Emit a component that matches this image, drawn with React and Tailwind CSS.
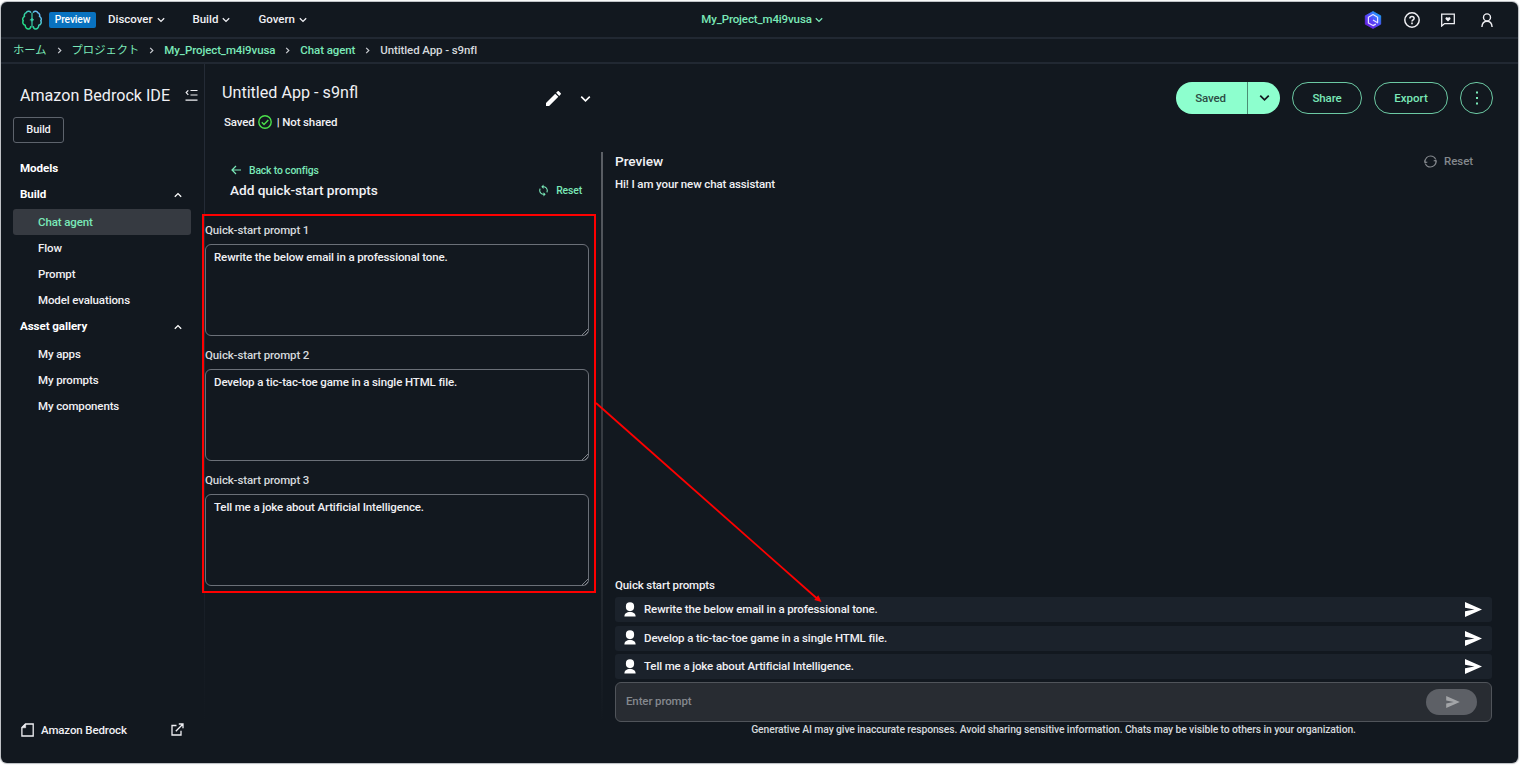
const Chevron = ({ dir = "down", className = "w-[8px] h-[6px]", sw = 1.3 }) => (
  <svg viewBox="0 0 8 6" fill="none" stroke="currentColor" strokeWidth={sw} className={className}>
    {dir === "down" ? <path d="M0.8 1.2 4 4.4 7.2 1.2" /> : <path d="M0.8 4.8 4 1.6 7.2 4.8" />}
  </svg>
);

const ChevronRight = () => (
  <svg viewBox="0 0 5 8" fill="none" stroke="currentColor" strokeWidth="1.4" className="h-[7px] w-[5px] text-[#c6c9ce]">
    <path d="M1 1 4 4 1 7" />
  </svg>
);

const BrainLogo = () => (
  <svg viewBox="0 0 20 20" fill="none" stroke="url(#brain)" strokeWidth="1.5" strokeLinejoin="round" strokeLinecap="round" className="h-5 w-5">
    <defs>
      <linearGradient id="brain" x1="2" y1="18" x2="18" y2="3" gradientUnits="userSpaceOnUse">
        <stop offset="0" stopColor="#1edb7c" />
        <stop offset="0.5" stopColor="#35d3a8" />
        <stop offset="1" stopColor="#6fb6ff" />
      </linearGradient>
    </defs>
    <path d="M8.600 2.200C7.600 0.700 5 0.900 4.200 2.800 2.600 3.200 1.900 4.900 2.500 6.400 0.500 7.600 0.300 9.600 1.200 10.600 0.300 12.600 1 14.600 3.200 15.200 3.200 17.500 4.800 19.200 6.600 19 8 18.900 8.600 18 8.600 16.800" />
    <path d="M11.400 2.200C12.400 0.700 15 0.900 15.800 2.800 17.400 3.200 18.100 4.900 17.500 6.400 19.500 7.600 19.700 9.600 18.800 10.600 19.700 12.600 19 14.600 16.800 15.200 16.800 17.500 15.200 19.200 13.400 19 12 18.900 11.400 18 11.400 16.800" />
    <rect x="9.400" y="2.500" width="1.200" height="15" rx="0.600" fill="#3ad0ae" stroke="none" />
    <path d="M8 9.800 10 8.300 12 9.800 10 11.300Z" fill="url(#brain)" strokeWidth="0.300" />
  </svg>
);

const HexLogo = () => (
  <svg viewBox="0 0 18 18" className="h-[18px] w-[18px]">
    <defs>
      <linearGradient id="hex" x1="3" y1="16" x2="15" y2="2" gradientUnits="userSpaceOnUse">
        <stop offset="0" stopColor="#6a1fe0" />
        <stop offset="0.5" stopColor="#5548fa" />
        <stop offset="1" stopColor="#1ba6ff" />
      </linearGradient>
    </defs>
    <path d="M9 0.500 16.700 4.800V13.200L9 17.500 1.300 13.200V4.800Z" fill="url(#hex)" stroke="url(#hex)" strokeWidth="0.800" strokeLinejoin="round" />
    <path d="M11.800 13.100 9 14.600 4.400 12V6.200L9 3.600 13.600 6.200V11.800L9 9" fill="none" stroke="#e6e2ff" strokeWidth="1.200" strokeLinejoin="round" />
  </svg>
);

const HelpIcon = () => (
  <svg viewBox="0 0 16 16" fill="none" stroke="currentColor" className="h-4 w-4">
    <circle cx="8" cy="8" r="7.200" strokeWidth="1.500" />
    <path d="M5.900 6.500C5.900 3.800 10.100 3.900 10.100 6.400 10.100 7.900 8 7.900 8 9.600" strokeWidth="1.500" />
    <path d="M8 10.600V12.200" strokeWidth="1.600" />
  </svg>
);

const FeedbackIcon = () => (
  <svg viewBox="0 0 14 14" fill="none" stroke="currentColor" className="h-[14px] w-[14px]">
    <path d="M0.700 1.200H13.300V10.600H3.600L0.700 13Z" strokeWidth="1.300" />
    <path d="M7 8.500 4.500 5.900C4.100 4.200 6.200 3.600 7 4.800 7.800 3.600 9.900 4.200 9.500 5.900Z" fill="currentColor" stroke="none" />
  </svg>
);

const UserIcon = () => (
  <svg viewBox="0 0 12 14" fill="none" stroke="currentColor" strokeWidth="1.400" className="h-[14px] w-[12px]">
    <circle cx="6" cy="4.400" r="3.500" />
    <path d="M0.900 14C1.200 10.500 3.200 8.300 6 8.300S10.800 10.500 11.100 14" />
  </svg>
);

const MenuFold = () => (
  <svg viewBox="0 0 13 12" fill="none" stroke="currentColor" strokeWidth="1.200" className="mb-[2px] h-3 w-[13px]">
    <path d="M5.500 1.500H12.500M5.500 6H12.500M0.500 11.200H12.500M3.300 1.300 1.200 3.600 3.300 5.900" />
  </svg>
);

const SyncIcon = ({ className }) => (
  <svg viewBox="2 0 20 24" fill="currentColor" className={className}>
    <path d="M12 4V1L8 5l4 4V6c3.310 0 6 2.690 6 6 0 1.010-.25 1.970-.7 2.800l1.460 1.460C19.540 15.030 20 13.570 20 12c0-4.420-3.580-8-8-8zm0 14c-3.310 0-6-2.690-6-6 0-1.010.25-1.970.7-2.800L5.240 7.740C4.460 8.970 4 10.430 4 12c0 4.420 3.580 8 8 8v3l4-4-4-4v3z" />
  </svg>
);

const RefreshRing = () => (
  <svg viewBox="0 0 13 13" fill="none" stroke="currentColor" strokeWidth="1.100" className="h-[13px] w-[13px]">
    <path d="M1 7.500C0.500 3 4 1 6.500 1 9 1 10.800 2.300 11.600 4.300M12 5.500C12.500 10 9 12 6.500 12 4 12 2.200 10.700 1.400 8.700" />
    <path d="M12.300 7.500 11.900 5.200 9.700 6M0.700 5.500 1.100 7.800 3.300 7" />
  </svg>
);

const Pencil = () => (
  <svg viewBox="3 3 18 18" fill="currentColor" className="h-[15px] w-[15px]">
    <path d="M3 17.250V21h3.750L17.810 9.940l-3.750-3.750L3 17.250zM20.710 7.040c.39-.39.39-1.020 0-1.410l-2.340-2.340a.9959.9959 0 0 0-1.410 0l-1.830 1.830 3.750 3.750 1.830-1.830z" />
  </svg>
);

const SendIcon = ({ className }) => (
  <svg viewBox="0 0 17 15" fill="currentColor" className={className}>
    <path d="M0 0 17 7.500 0 15V9.300L9.500 7.500 0 5.700Z" />
  </svg>
);

const PersonSolid = () => (
  <svg viewBox="0 0 12 15" fill="currentColor" className="mb-px h-[15px] w-[12px] text-white">
    <rect x="1.900" y="0.200" width="8.200" height="9" rx="4.100" />
    <path d="M0.400 14.600C0.400 11.500 2.500 10 6 10S11.600 11.500 11.600 14.600Z" />
  </svg>
);

const NAV = ["Discover", "Build", "Govern"];
const CRUMBS = ["ホーム", "プロジェクト", "My_Project_m4i9vusa", "Chat agent"];
const PROMPTS = [
  "Rewrite the below email in a professional tone.",
  "Develop a tic-tac-toe game in a single HTML file.",
  "Tell me a joke about Artificial Intelligence.",
];

function NavItem({ label, active }) {
  return (
    <a className={active ? "flex h-[26px] items-center rounded-[3px] bg-[#363a41] pt-px pl-[25px] text-[#7ae8b8]" : "flex h-[26px] items-center pt-px pl-[25px]"}>
      {label}
    </a>
  );
}

function NavHeading({ label, open }) {
  return (
    <div className="flex h-[26px] items-center justify-between pt-px pr-[9px] pl-[7px] text-[11.600px] font-bold tracking-[-0.08px] text-white">
      {label}
      {open && <Chevron dir="up" />}
    </div>
  );
}

function TopBar() {
  return (
    <header className="grid h-[37px] shrink-0 grid-cols-[1fr_auto_1fr] items-center border-b-2 border-[#212832] pt-px pr-[25px] pl-[21px]">
      <div className="flex items-center">
        <BrainLogo />
        <span className="mr-[12px] ml-[7px] flex h-[16px] w-[47px] items-center justify-center rounded-[2px] bg-[#0972c0] text-[10.300px] tracking-[-0.15px] text-white">Preview</span>
        <nav className="flex gap-[28px]">
          {NAV.map((n) => (
            <a key={n} className="flex items-center gap-[4px] tracking-[-0.02px]">
              {n}
              <Chevron />
            </a>
          ))}
        </nav>
      </div>
      <div className="ml-[9px] flex items-center gap-[3px] text-[#7ae8b8]">
        My_Project_m4i9vusa
        <Chevron />
      </div>
      <div className="flex items-center justify-end">
        <HexLogo />
        <span className="ml-[22px]"><HelpIcon /></span>
        <span className="ml-[21px]"><FeedbackIcon /></span>
        <span className="ml-[26px]"><UserIcon /></span>
      </div>
    </header>
  );
}

function Sidebar() {
  return (
    <aside className="flex w-[203px] shrink-0 flex-col pr-[13px] pl-[12px]">
      <div className="mt-[21px] -mr-[7px] flex h-[20px] items-center justify-between pt-[2px] pl-[7px] text-[16.100px] font-normal tracking-normal">
        Amazon Bedrock IDE
        <MenuFold />
      </div>
      <button className="mt-[12px] h-[26px] w-[51px] rounded-[3px] border border-[#5d636c] text-[11px] tracking-[-0.1px]">Build</button>
      <div className="mt-[12px]">
        <NavHeading label="Models" />
        <NavHeading label="Build" open />
        <div className="mt-[2px]">
          <NavItem label="Chat agent" active />
          <NavItem label="Flow" />
          <NavItem label="Prompt" />
          <NavItem label="Model evaluations" />
        </div>
        <NavHeading label="Asset gallery" open />
        <div className="mt-[2px]">
          <NavItem label="My apps" />
          <NavItem label="My prompts" />
          <NavItem label="My components" />
        </div>
      </div>
      <div className="mt-auto mb-[24px] flex h-[18px] items-center pl-[8px]">
        <svg viewBox="0 0 13 14" fill="none" stroke="currentColor" strokeWidth="1.300" className="h-[14px] w-[13px]">
          <path d="M4.500 1H12.200V13H0.900V4.600Z" />
          <path d="M0.900 4.800H4.700V1Z" fill="currentColor" strokeWidth="0.500" />
        </svg>
        <span className="ml-[7px] pt-px">Amazon Bedrock</span>
        <svg viewBox="0 0 13 13" fill="none" stroke="currentColor" strokeWidth="1.300" className="mr-[7px] mb-px ml-auto h-[13px] w-[13px]">
          <path d="M5.500 2.500H1V12H10V7.800M7.800 1H12V5.200M12 1 4.800 8.200" />
        </svg>
      </div>
    </aside>
  );
}

function AppHeader() {
  return (
    <div className="flex h-[88px] shrink-0 items-start pr-[25px]">
      <div className="w-[341px] shrink-0 pl-[17px]">
        <h1 className="mt-[18px] h-[20px] text-[16.150px] leading-[21px] font-normal tracking-normal">Untitled App - s9nfl</h1>
        <div className="mt-[12px] flex h-[16px] items-center pl-[2px]">
          <span className="pt-px">Saved</span>
          <svg viewBox="0 0 14 14" fill="none" stroke="#4be04b" strokeWidth="1.400" className="mr-[5px] ml-[3px] h-[14px] w-[14px]">
            <circle cx="7" cy="7" r="6.200" />
            <path d="M3.800 7.200 6 9.400 10.300 4.900" />
          </svg>
          <span className="pt-px">| Not shared</span>
        </div>
      </div>
      <div className="mt-[27px] flex items-center gap-[19px] text-white">
        <Pencil />
        <Chevron className="h-[8px] w-[11px]" sw={1.200} />
      </div>
      <div className="mt-[18px] ml-auto flex text-[#7ae8b8]">
        <div className="flex h-[32px] w-[104px] overflow-hidden rounded-full bg-[#8dffce] text-[#2c4c44]">
          <span className="flex w-[72px] items-center justify-center border-r border-[#4b8d74] pt-px pr-[2px]">Saved</span>
          <span className="flex flex-1 items-center justify-center text-[#12181f]"><Chevron className="h-[8px] w-[11px]" sw={1.300} /></span>
        </div>
        <button className="ml-[12px] h-[32px] w-[70px] rounded-full border border-[#6cc9a3] pt-px">Share</button>
        <button className="ml-[12px] h-[32px] w-[74px] rounded-full border border-[#6cc9a3] pt-px tracking-normal">Export</button>
        <button className="ml-[12px] flex h-[32px] w-[33px] items-center justify-center rounded-full border border-[#6cc9a3]">
          <svg viewBox="0 0 2 14" fill="currentColor" className="h-[14px] w-[2px]">
            <rect y="0.500" width="2" height="2" /><rect y="6" width="2" height="2" /><rect y="11.500" width="2" height="2" />
          </svg>
        </button>
      </div>
    </div>
  );
}

function Configs() {
  return (
    <section className="w-[396px] shrink-0">
      <div className="mt-[10px] flex h-[16px] items-center pl-[26px] text-[10.400px] tracking-[-0.16px] text-[#7ae8b8]">
        <svg viewBox="0 0 10 10" fill="none" stroke="currentColor" strokeWidth="1.200" className="mr-[8px] h-[10px] w-[10px]">
          <path d="M10 5H1M5 1 1 5 5 9" />
        </svg>
        <span className="pt-px">Back to configs</span>
      </div>
      <div className="mt-[2px] flex h-[20px] items-center justify-between pr-[19px] pl-[25px] text-[13.700px] tracking-[-0.06px]">
        Add quick-start prompts
        <span className="flex items-center gap-[7px] pt-px text-[10.400px] tracking-[-0.13px] text-[#7ae8b8]">
          <SyncIcon className="h-[13px] w-[11px]" />
          Reset
        </span>
      </div>
      <div className="mt-[22px] flex flex-col gap-[11px]">
        {PROMPTS.map((p, i) => (
          <label key={p} className="block h-[114px]">
            <span className="flex h-[22px] items-center pb-[4px] text-[#d5d8dc]">Quick-start prompt {i + 1}</span>
            <span className="relative block h-[92px] w-[384px] rounded-[6px] border border-[#6b7078] px-[8px] pt-[4px] leading-[16px]">
              {p}
              <svg viewBox="0 0 6 6" stroke="#8b8f95" strokeWidth="0.900" className="absolute right-0 bottom-0 h-[6px] w-[6px]">
                <path d="M0 6 6 0M3 6 6 3" />
              </svg>
            </span>
          </label>
        ))}
      </div>
    </section>
  );
}

function PreviewPane() {
  return (
    <section className="flex min-w-0 flex-1 flex-col pr-[26px] pl-[12px]">
      <div className="flex h-[18px] items-center justify-between pr-[19px] text-[13.700px] tracking-[-0.06px]">
        Preview
        <span className="flex items-center gap-[7px] text-[11.500px] tracking-[-0.08px] text-[#84888d]">
          <RefreshRing />
          <span className="pt-px">Reset</span>
        </span>
      </div>
      <p className="mt-[6px] h-[16px] leading-[16px]">Hi! I am your new chat assistant</p>
      <div className="mt-auto mb-[4px] h-[16px] leading-[16px]">Quick start prompts</div>
      <div className="flex flex-col gap-[3.500px]">
        {PROMPTS.map((p) => (
          <div key={p} className="flex h-[25px] items-center rounded-[3px] bg-[#1b222b] pr-[10px] pl-[9px]">
            <PersonSolid />
            <span className="ml-[8px] pt-px">{p}</span>
            <SendIcon className="ml-auto h-[15px] w-[17px] text-white" />
          </div>
        ))}
      </div>
      <div className="mt-[3px] flex h-[40px] items-center justify-between rounded-[6px] border border-[#50545a] bg-[#282c32] pr-[14px] pl-[10px] text-[#84888d]">
        <span className="pb-px">Enter prompt</span>
        <span className="flex h-[26px] w-[51px] items-center justify-center rounded-full bg-[#5d6066] pl-[3px]">
          <SendIcon className="h-[12px] w-[14px] text-[#a3a5a8]" />
        </span>
      </div>
      <p className="mb-[26px] h-[15px] text-center text-[10.400px] leading-[15px] tracking-[-0.12px] text-[#d5d8dc]">
        Generative AI may give inaccurate responses. Avoid sharing sensitive information. Chats may be visible to others in your organization.
      </p>
    </section>
  );
}

export default function App() {
  return (
    <div className="relative h-[766px] w-[1521px] overflow-hidden bg-white pt-[2px] pl-px font-['Roboto','Noto_Sans_CJK_JP',sans-serif] text-[11.500px] font-medium tracking-[-0.125px] text-[#f0f0f4]">
      <div className="flex h-[761px] w-[1517px] flex-col overflow-hidden rounded-[6px] bg-[#12181f] shadow-[0_0_1px_1px_#b9bcc0]">
        <TopBar />
        <div className="flex h-[25px] shrink-0 items-center border-b-2 border-[#212832] pl-[12px]">
          {CRUMBS.map((c, i) => (
            <span key={c} className="flex items-center text-[#7ae8b8]">
              <span className={i < 2 ? "pt-px text-[11.300px] font-normal tracking-normal" : "tracking-[-0.1px]"}>{c}</span>
              <span className="mx-[10px]"><ChevronRight /></span>
            </span>
          ))}
          <span className="tracking-[-0.1px] text-[#d5d8dc]">Untitled App - s9nfl</span>
        </div>
        <div className="flex min-h-0 flex-1">
          <Sidebar />
          <div className="w-px shrink-0 bg-linear-to-b from-[#242b36] from-50% to-[#12181f] to-95%" />
          <main className="flex min-w-0 flex-1 flex-col">
            <AppHeader />
            <div className="flex min-h-0 flex-1">
              <Configs />
              <div className="h-[570px] w-[2px] shrink-0 bg-linear-to-b from-[#5c6066] to-[#12181f]" />
              <PreviewPane />
            </div>
          </main>
        </div>
      </div>
      <svg viewBox="0 0 1521 766" className="pointer-events-none absolute inset-0 h-[766px] w-[1521px]" fill="none" stroke="#fe0000" strokeWidth="2">
        <rect x="203" y="215" width="392" height="377" />
        <path d="M596 403 817 598.500" strokeWidth="1.800" />
        <path d="M821.500 602 814.200 600 818.300 595.300Z" fill="#fe0000" stroke="none" />
      </svg>
    </div>
  );
}
